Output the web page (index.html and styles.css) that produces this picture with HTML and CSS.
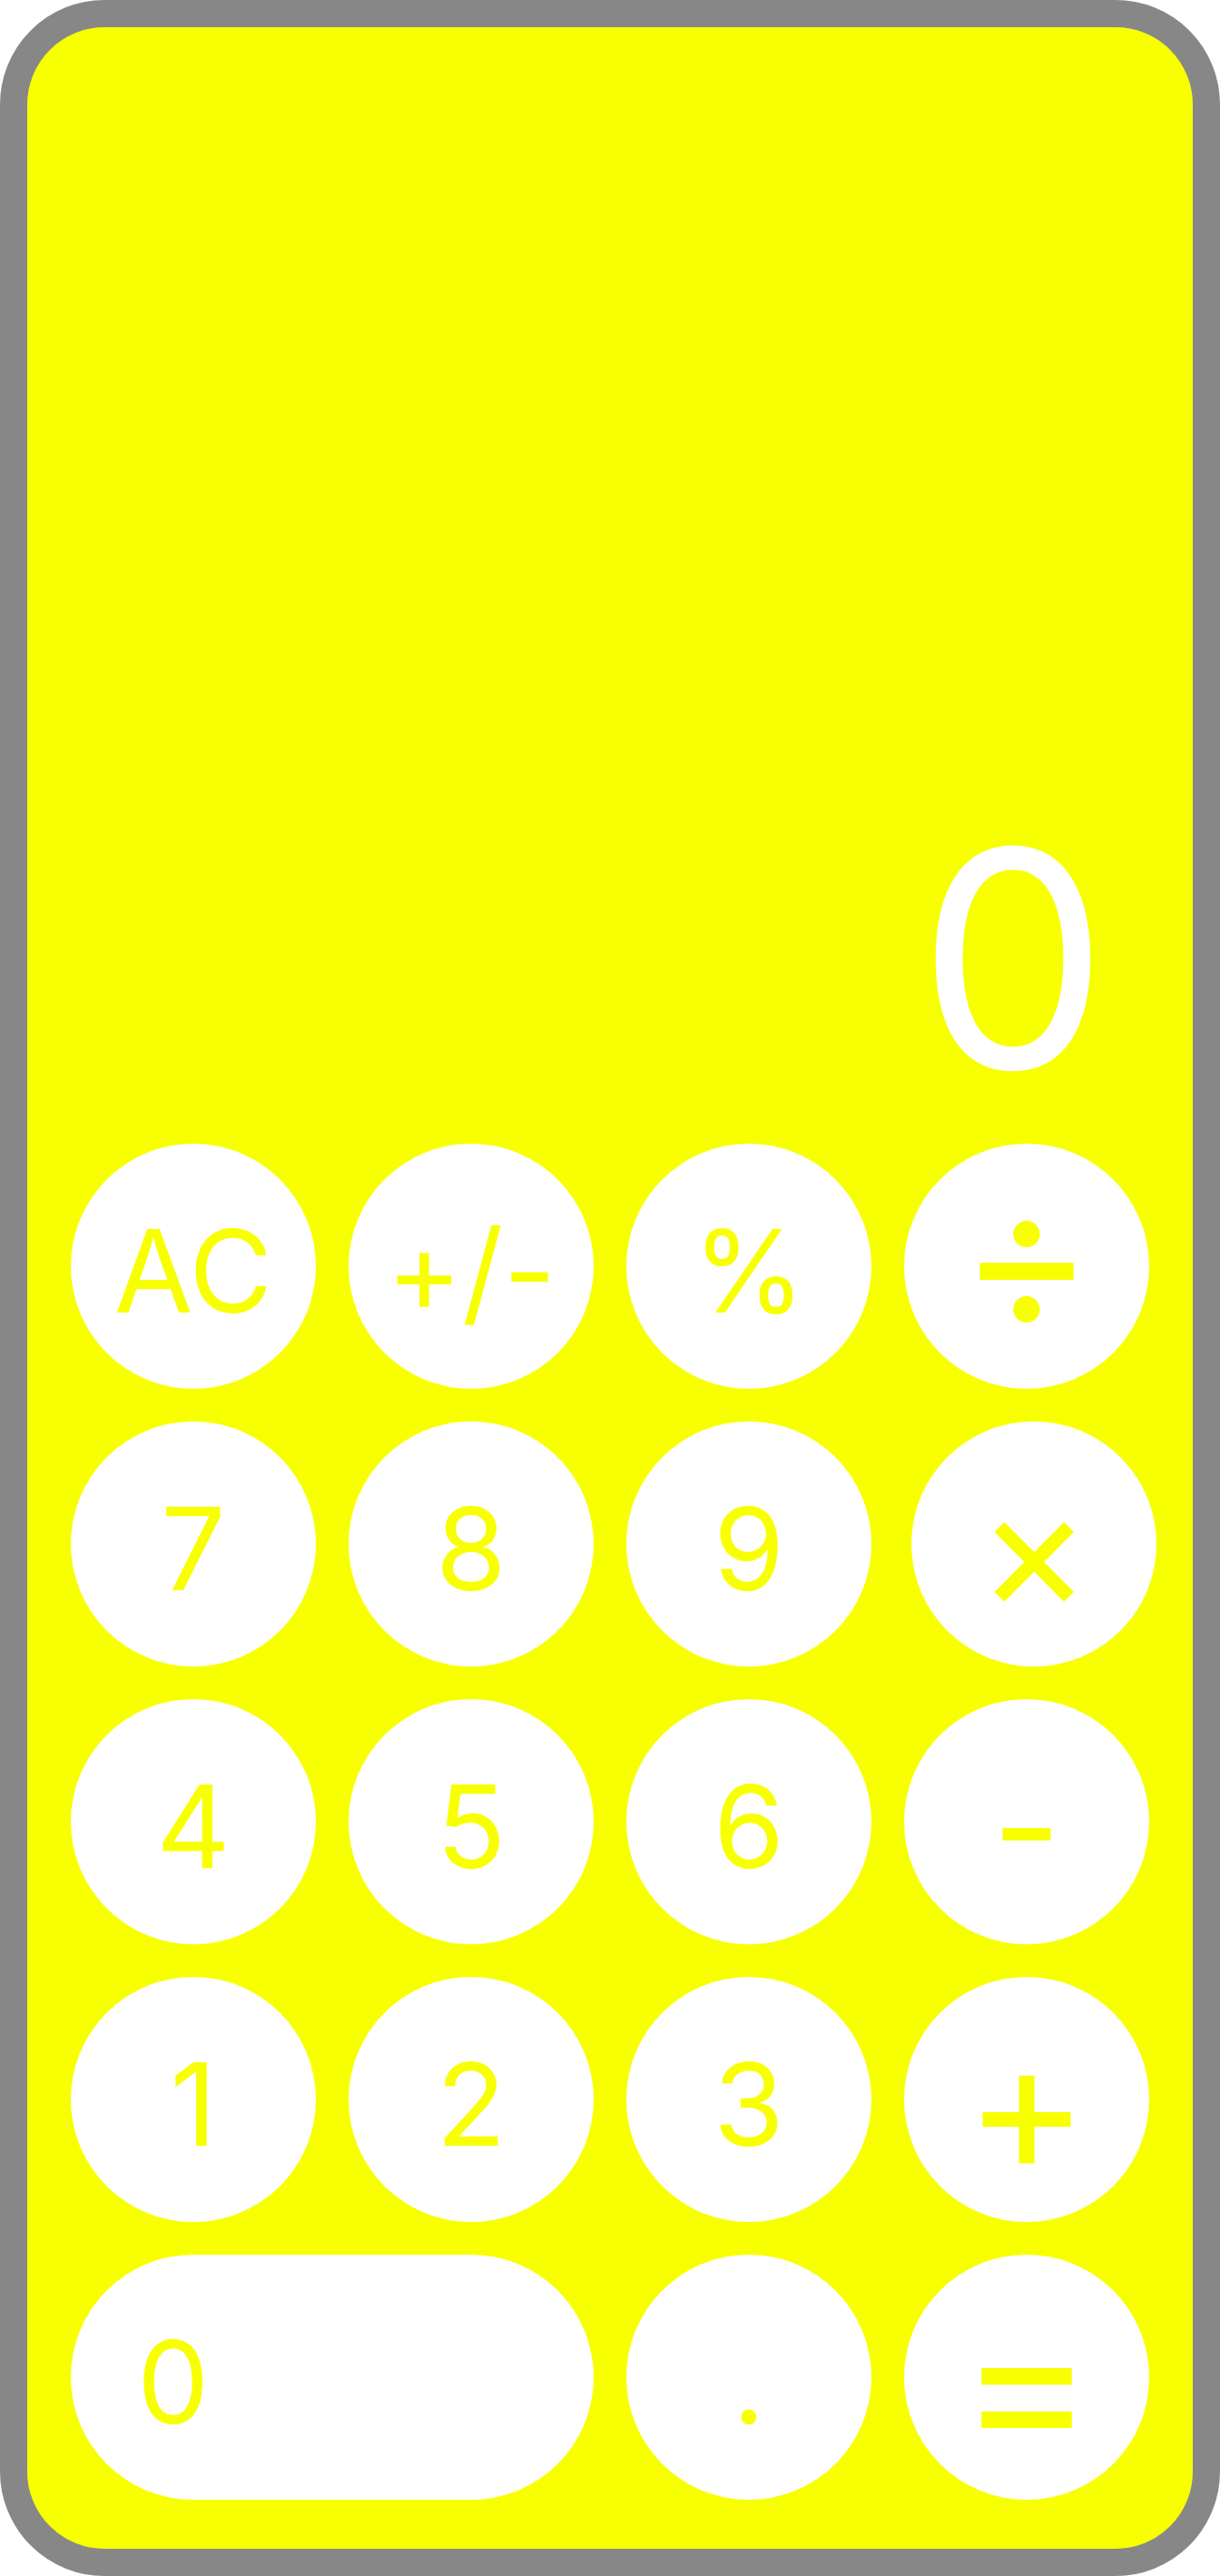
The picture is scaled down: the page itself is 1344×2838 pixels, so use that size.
FILE: index.html
```html
<!DOCTYPE html>
<html>
<head>
<meta charset="utf-8">
<link rel="stylesheet" href="styles.css">
</head>
<body>
<div class="device">
  <div class="display">0</div>
  <div class="keypad">
    <div class="key">AC</div>
    <div class="key">+/-</div>
    <div class="key">%</div>
    <div class="key op divide">÷</div>
    <div class="key">7</div>
    <div class="key">8</div>
    <div class="key">9</div>
    <div class="key op times">×</div>
    <div class="key">4</div>
    <div class="key">5</div>
    <div class="key">6</div>
    <div class="key minus">-</div>
    <div class="key">1</div>
    <div class="key">2</div>
    <div class="key">3</div>
    <div class="key op plus">+</div>
    <div class="key wide">0</div>
    <div class="key">.</div>
    <div class="key op">=</div>
  </div>
</div>
</body>
</html>
```
FILE: styles.css
```css
html, body {
  margin: 0;
  padding: 0;
  background: #ffffff;
}

.device {
  width: 1344px;
  height: 2838px;
  box-sizing: border-box;
  border: 30px solid #878787;
  border-radius: 115px;
  background: #f8ff00;
  display: flex;
  flex-direction: column;
  justify-content: flex-end;
  padding: 0 48px 54px;
  font-family: Inter, "Noto Sans", sans-serif;
}

.display {
  color: #ffffff;
  font-size: 333px;
  font-weight: 400;
  line-height: 1;
  text-align: right;
  padding-right: 45px;
  margin-bottom: 38px;
}

.keypad {
  display: grid;
  grid-template-columns: repeat(4, 270px);
  grid-auto-rows: 270px;
  gap: 36px;
}

.key {
  background: #ffffff;
  border-radius: 135px;
  color: #f8ff00;
  font-size: 126px;
  font-weight: 400;
  line-height: 1;
  display: flex;
  align-items: center;
  justify-content: center;
  box-sizing: border-box;
  padding-top: 10px;
}

.key.op {
  font-size: 225px;
}

.key.divide {
  padding-top: 0;
  padding-bottom: 24px;
}

.key.times {
  font-size: 190px;
  width: 270px;
  margin-left: 8px;
}

.key.plus {
  font-size: 205px;
}

.key.minus {
  font-size: 165px;
}

.key.wide {
  grid-column: span 2;
  justify-content: flex-start;
  padding-left: 73px;
}
```
